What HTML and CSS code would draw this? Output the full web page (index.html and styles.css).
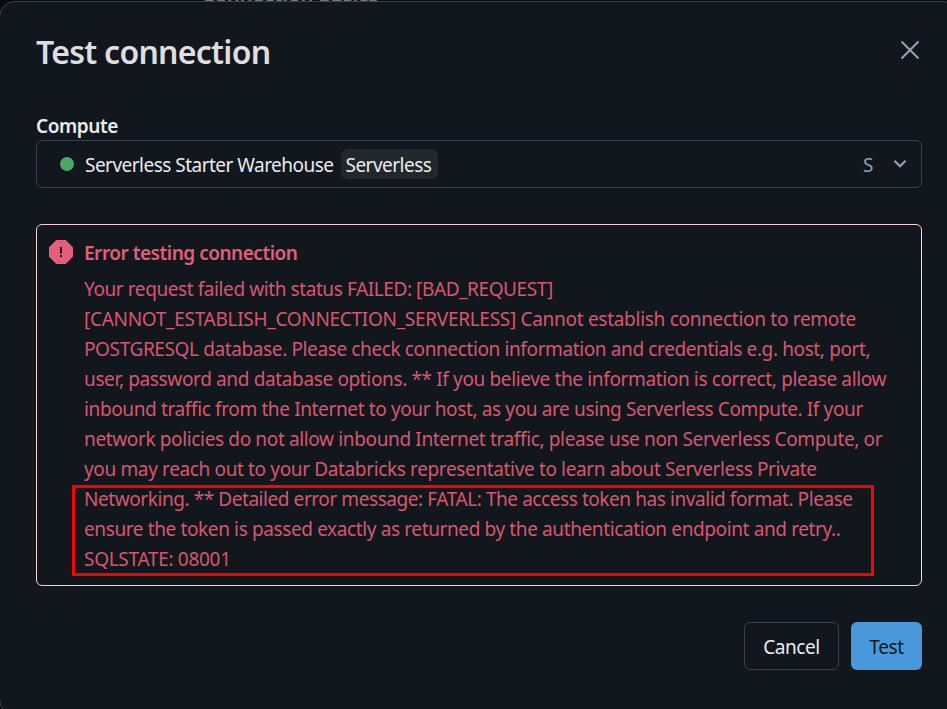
FILE: index.html
```html
<!DOCTYPE html>
<html lang="en">
<head>
<meta charset="utf-8">
<title>Test connection</title>
<link rel="stylesheet" href="styles.css">
</head>
<body>
<div class="behind">Connection basics</div>
<main class="dialog">
  <header class="head">
    <h1>Test connection</h1>
    <svg class="close" viewBox="0 0 20 20" width="20" height="20"><path d="M1.500 1.500l17 17M18.500 1.500l-17 17" fill="none" stroke="#92a4b3" stroke-width="2"/></svg>
  </header>
  <div class="label">Compute</div>
  <div class="select">
    <i class="dot"></i>
    <span class="name">Serverless Starter Warehouse</span>
    <span class="tag">Serverless</span>
    <span class="size">S</span>
    <svg class="chev" viewBox="0 0 14 10" width="14" height="10"><path d="M1.500 1.800L7 7.300l5.500-5.500" fill="none" stroke="#92a4b3" stroke-width="2.200"/></svg>
  </div>
  <section class="alert">
    <svg class="icon" viewBox="0 0 24 24" width="24" height="24"><path d="M7.300 0h9.400L24 7.300v9.400L16.700 24H7.300L0 16.700V7.300z" fill="#e35e78"/><path d="M11 7h2v6.500h-2zM11 15h2v2h-2z" fill="#11171c"/></svg>
    <div class="body">
      <h2>Error testing connection</h2>
      <p>
        <span class="l1">Your request failed with status FAILED: [BAD_REQUEST]</span>
        <span class="l2">[CANNOT_ESTABLISH_CONNECTION_SERVERLESS] Cannot establish connection to remote</span>
        <span class="l3">POSTGRESQL database. Please check connection information and credentials e.g. host, port,</span>
        <span class="l4">user, password and database options. ** If you believe the information is correct, please allow</span>
        <span class="l5">inbound traffic from the Internet to your host, as you are using Serverless Compute. If your</span>
        <span class="l6">network policies do not allow inbound Internet traffic, please use non Serverless Compute, or</span>
        <span class="l7">you may reach out to your Databricks representative to learn about Serverless Private</span>
        <span class="l8">Networking. ** Detailed error message: FATAL: The access token has invalid format. Please</span>
        <span class="l9">ensure the token is passed exactly as returned by the authentication endpoint and retry..</span>
        <span class="l10">SQLSTATE: 08001</span>
      </p>
    </div>
    <div class="highlight"></div>
  </section>
  <footer class="actions">
    <button class="cancel">Cancel</button>
    <button class="primary">Test</button>
  </footer>
</main>
</body>
</html>
```
FILE: styles.css
```css
* { box-sizing: border-box; }
html, body { margin: 0; height: 709px; overflow: hidden; background: #080b0e; }
body { font: 19px/30px "Noto Sans", sans-serif; color: #e8ecf0; }
.behind { height: 1px; overflow: hidden; display: flex; align-items: flex-end; padding-left: 202px; font-size: 20px; line-height: 13px; font-weight: 600; color: #74797d; white-space: nowrap; }
.dialog { width: 960px; height: 714px; margin-left: -1px; padding: 0 37px 0 36px; border: 1px solid #37444f; border-radius: 16px; background: #11171c; }
.head { height: 109px; width: 886px; padding-top: 29px; display: flex; justify-content: space-between; }
h1 { margin: 0; font-size: 32px; line-height: 42px; font-weight: 600; color: #dedede; white-space: nowrap; letter-spacing: -.74px; }
.close { margin: 9px 2px 0 0; }
.label { height: 29px; font-weight: 600; line-height: 30px; letter-spacing: -.43px; }
.select { width: 886px; height: 48px; border: 1px solid #37444f; border-radius: 6px; display: flex; align-items: center; padding: 0 14px 0 23px; white-space: nowrap; letter-spacing: -.52px; }
.dot { width: 14px; height: 14px; border-radius: 50%; background: #4ba764; margin-right: 11px; }
.name { padding-top: 2px; }
.tag { margin-left: 7px; padding: 1px 0 0 5px; width: 97px; height: 30px; border-radius: 6px; background: #22272c; }
.size { margin-left: auto; padding-top: 2px; color: #92a4b3; }
.chev { margin-left: 20px; }
.alert { position: relative; width: 886px; height: 362px; margin-top: 36px; border: 1px solid #fbd0d8; border-radius: 6px; padding: 13px 0 0 12px; display: flex; color: #d9566f; }
.icon { flex: none; margin: 2px 11px 0 0; }
h2 { margin: 0 0 6px; font-size: 19px; line-height: 30px; font-weight: 600; color: #e35e78; letter-spacing: -.48px; }
p { margin: 0; }
p span { display: block; width: max-content; white-space: nowrap; letter-spacing: -.36px; }
p .l1 { letter-spacing: -.41px; }
p .l2 { letter-spacing: -.29px; }
p .l3, p .l9 { letter-spacing: -.38px; }
p .l5 { letter-spacing: -.37px; }
p .l8 { letter-spacing: -.43px; }
p .l10 { letter-spacing: -.3px; }
.highlight { position: absolute; left: 35px; top: 260px; width: 802px; height: 91px; border: 3px solid #f00; }
.actions { width: 886px; margin-top: 36px; display: flex; justify-content: flex-end; gap: 12px; }
button { height: 48px; font: inherit; border-radius: 6px; padding: 2px 0 0; white-space: nowrap; letter-spacing: -.4px; }
.cancel { width: 95px; border: 1px solid #37444f; background: transparent; color: #e8ecf0; }
.primary { width: 71px; border: 0; background: #4a98dc; color: #11171c; }
```
